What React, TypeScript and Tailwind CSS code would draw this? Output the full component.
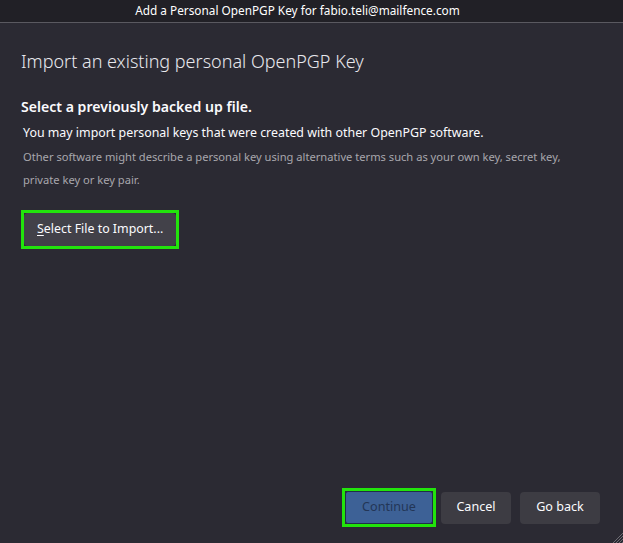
export default function App() {
  return (
    <div
      className="relative flex h-[543px] w-[623px] flex-col overflow-hidden bg-[#2b2a33] text-[#fbfbfe]"
      style={{ fontFamily: '"Noto Sans", "Open Sans", sans-serif' }}
    >
      {/* Title bar */}
      <div className="flex h-[23px] shrink-0 items-center justify-center border-b border-[#5a5960] bg-[#212026] pr-[28px] text-[11.8px] text-white">
        Add a Personal OpenPGP Key for fabio.teli@mailfence.com
      </div>

      {/* Body */}
      <div className="flex flex-1 flex-col px-[21px]">
        <h1 className="mt-[24px] text-[18px] font-light leading-[28px] text-[#e8e8ee]">
          Import an existing personal OpenPGP Key
        </h1>

        <h2 className="mt-[21px] text-[14.1px] font-semibold leading-[22px]">
          Select a previously backed up file.
        </h2>
        <p className="mt-[4px] pl-[2px] text-[12.4px] leading-[22px]">
          You may import personal keys that were created with other OpenPGP software.
        </p>
        <p className="mt-[1px] pl-[2px] text-[11.15px] leading-[23px] text-[#a8a7ad]">
          Other software might describe a personal key using alternative terms such as your own key, secret key,
          <br />
          private key or key pair.
        </p>

        <div className="mt-[19px] self-start border-[3px] border-[#22e40c] p-0">
          <button className="h-[33px] rounded-[4px] bg-[#424149] px-[13px] text-[12.4px] text-[#fbfbfe]">
            <span className="underline underline-offset-2">S</span>elect File to Import...
          </button>
        </div>

        <div className="flex-1" />

        {/* Footer buttons */}
        <div className="mb-[16px] flex items-center justify-end gap-[5px] pr-[2px]">
          <div className="border-[3px] border-[#22e40c]">
            <button className="h-[33px] w-[88px] rounded-[3px] border border-[#1f2f48] bg-[#3d6196] text-[12.6px] text-[#233656]">
              Continue
            </button>
          </div>
          <button className="h-[32px] w-[70px] rounded-[4px] bg-[#3d3c43] text-[12.6px] text-[#fbfbfe]">
            Cancel
          </button>
          <button className="ml-[4px] h-[32px] w-[80px] rounded-[4px] bg-[#3d3c43] text-[12.6px] text-[#fbfbfe]">
            Go back
          </button>
        </div>
      </div>

      {/* Resize grip */}
      <svg className="absolute bottom-0 right-0" width="12" height="12" viewBox="0 0 12 12">
        <path d="M12 2L2 12M12 5L5 12M12 8L8 12M12 11L11 12" stroke="#6c6b72" strokeWidth="1" />
      </svg>
    </div>
  );
}
